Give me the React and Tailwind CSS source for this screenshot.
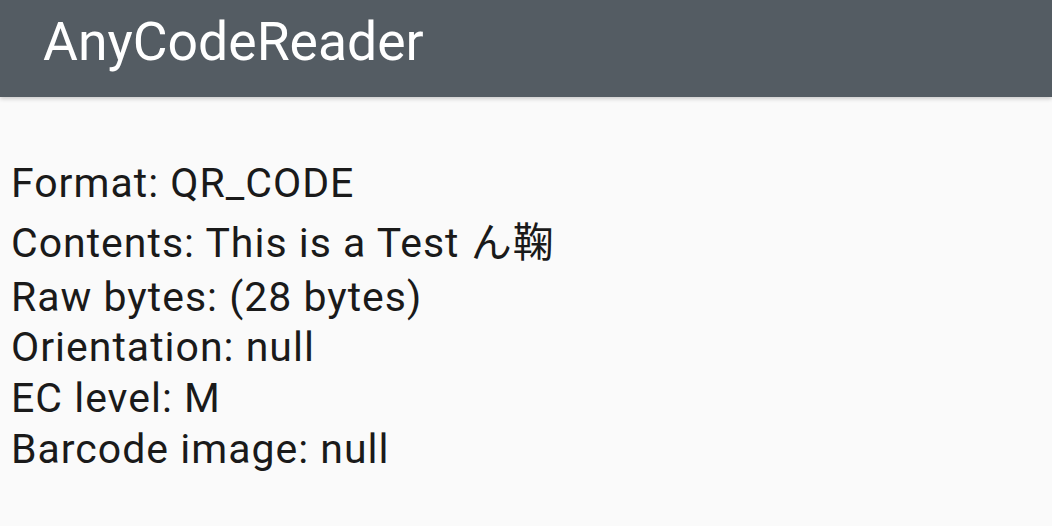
import React from 'react';

const lines = [
    { text: 'Format: QR_CODE', cls: 'h-[50.5px]' },
    { text: 'Contents: This is a Test ん鞠', cls: 'h-[54.3px] mt-[9.5px]' },
    { text: 'Raw bytes: (28 bytes)', cls: 'h-[50.4px]' },
    { text: 'Orientation: null', cls: 'h-[50.4px]' },
    { text: 'EC level: M', cls: 'h-[51px]' },
    { text: 'Barcode image: null', cls: 'h-[50.5px]' },
];

function App() {
    return (
        <div className="w-[1052px] h-[526px] bg-[#fafafa] overflow-hidden font-['Roboto','Noto_Sans_CJK_JP',sans-serif]">
            {/* action bar */}
            <div className="relative h-[97px] bg-[#545c63] flex items-center pl-[43px] shadow-[0_2px_4px_rgba(0,0,0,0.18)]">
                <h1 className="text-white text-[53.5px] leading-none -mt-[13px]">AnyCodeReader</h1>
            </div>

            <div className="pt-[60.5px] pl-[11px] text-[41px] tracking-[1px] leading-[50.5px] text-[#1a1a1a]">
                {lines.map((line) => (
                    <div key={line.text} className={line.cls + ' whitespace-nowrap'}>
                        {line.text}
                    </div>
                ))}
            </div>
        </div>
    );
}

export default App;
